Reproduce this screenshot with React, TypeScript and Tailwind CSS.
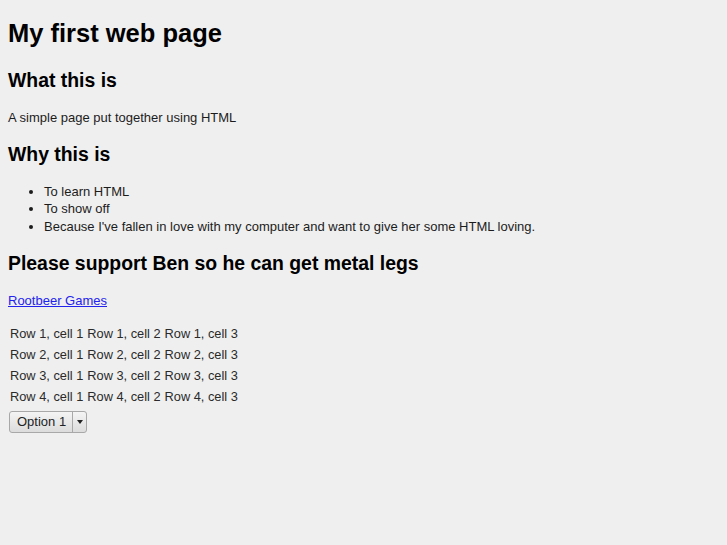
const rows = [1, 2, 3, 4];

export default function App() {
  return (
    <div
      className="min-h-[545px] bg-[#efefef] px-[8px] text-[13px] text-[#1c1c1c]"
      style={{ fontFamily: '"Liberation Sans", Arial, sans-serif' }}
    >
      <h1 className="pt-[18px] text-[25.5px] font-bold leading-[30px] text-black">My first web page</h1>
      <h2 className="mt-[21px] text-[19.4px] font-bold leading-[22px] text-black">What this is</h2>
      <p className="mt-[18.5px] leading-[15px]">A simple page put together using HTML</p>
      <h2 className="mt-[18.5px] text-[19.4px] font-bold leading-[22px] text-black">Why this is</h2>
      <ul className="mt-[17.5px] list-disc pl-[36px] leading-[17.5px]">
        <li>To learn HTML</li>
        <li>To show off</li>
        <li>Because I've fallen in love with my computer and want to give her some HTML loving.</li>
      </ul>
      <h2 className="mt-[17px] text-[19.4px] font-bold leading-[22px] text-black">
        Please support Ben so he can get metal legs
      </h2>
      <p className="mt-[18.5px] leading-[15px]">
        <a href="#" className="text-[#2323ee] underline">
          Rootbeer Games
        </a>
      </p>
      <table className="-ml-[1px] mt-[14px] border-separate border-spacing-[2px] text-[12.8px] text-[#2a2a2a]">
        <tbody>
          {rows.map((r) => (
            <tr key={r}>
              <td className="p-[1px] leading-[17px]">Row {r}, cell 1</td>
              <td className="p-[1px] leading-[17px]">Row {r}, cell 2</td>
              <td className="p-[1px] leading-[17px]">Row {r}, cell 3</td>
            </tr>
          ))}
        </tbody>
      </table>
      <div className="ml-[1px] mt-[3px] flex h-[22px] w-[78px] overflow-hidden rounded-[3px] border border-[#a8a8a8] bg-gradient-to-b from-[#f4f4f4] to-[#dcdcdc] text-[#222]">
        <div className="flex flex-1 items-center pl-[7px] text-[13px]">Option 1</div>
        <div className="flex w-[14px] items-center justify-center border-l border-[#a8a8a8]">
          <div className="h-0 w-0 border-x-[3.5px] border-t-[4px] border-x-transparent border-t-[#222]" />
        </div>
      </div>
    </div>
  );
}
